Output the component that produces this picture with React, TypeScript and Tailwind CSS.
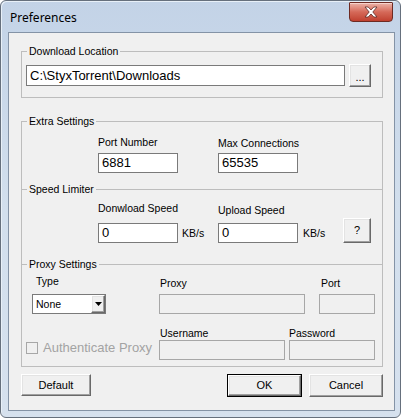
import React from "react";

const raised =
  "border border-t-white border-l-white border-r-[#696969] border-b-[#696969] shadow-[inset_-1px_-1px_0_#a0a0a0,inset_1px_1px_0_#e3e3e3] bg-[#f0f0f0]";

function TextBox({ w, value, disabled }: { w: string; value?: string; disabled?: boolean }) {
  return (
    <div
      className={`${w} h-[20px] border ${
        disabled ? "border-[#a7a7a7] bg-[#f0f0f0]" : "border-[#7a7a7a] bg-white"
      } text-[13px] leading-[18px] pl-[3px]`}
    >
      {value}
    </div>
  );
}

function Label({ children, cls = "" }: { children: React.ReactNode; cls?: string }) {
  return <div className={`text-[10.5px] leading-[13px] whitespace-nowrap ${cls}`}>{children}</div>;
}

export default function App() {
  return (
    <div className="w-[403px] h-[420px] bg-white font-['Liberation_Sans',Arial,sans-serif] text-black">
      <div className="w-[401px] h-[418px] border border-[#66707d] rounded-[6px] bg-linear-to-b from-[#c3d3e7] via-[#d2dfed] to-[#d6e1ee] flex flex-col shadow-[inset_1px_1px_0_#e8f0f8]">
        {/* title bar */}
        <div className="h-[31px] shrink-0 flex items-start justify-between">
          <span className="ml-[9px] mt-[9px] text-[12px] leading-[15px] font-['Noto_Sans',sans-serif] text-black">
            Preferences
          </span>
          <div className="mt-[1px] mr-[7px] w-[44px] h-[20px] rounded-b-[4px] rounded-t-[1px] border border-[#6e2b23] bg-linear-to-b from-[#eab3a9] via-[#d56959] to-[#c0402f] flex items-center justify-center shadow-[inset_0_1px_0_#f5d2cb]">
            <svg width="14" height="12" viewBox="0 0 14 12">
              <polygon
                points="1,1 4.2,1 7,4 9.8,1 13,1 8.8,6 13,11 9.8,11 7,8 4.2,11 1,11 5.2,6"
                fill="#ffffff"
                stroke="#5a2a25"
                strokeWidth="0.8"
                strokeLinejoin="round"
              />
            </svg>
          </div>
        </div>

        {/* client area */}
        <div className="ml-[7px] w-[387px] h-[379px] border border-[#8493a6] bg-[#f0f0f0] flex flex-col">
          {/* Download Location */}
          <fieldset className="mt-[11px] ml-[12px] w-[362px] border border-[#bdbdbd] px-0 pb-[10px]">
            <legend className="ml-[5px] px-[2px] text-[10.5px] leading-[14px]">Download Location</legend>
            <div className="flex items-center gap-[4px] pl-[4px] pt-[6px]">
              <div className="w-[319px] h-[21px] bg-white border border-[#7a7a7a] text-[13px] leading-[19px] pl-[3px]">
                {"C:\\StyxTorrent\\Downloads"}
              </div>
              <div className={`w-[22px] h-[23px] ${raised} flex items-center justify-center text-[11px] leading-[11px] pt-[3px]`}>
                ...
              </div>
            </div>
          </fieldset>

          {/* Extra Settings */}
          <fieldset className="mt-[16px] ml-[12px] w-[362px] border border-[#bdbdbd] px-0 pb-[6px]">
            <legend className="ml-[5px] px-[2px] text-[10.5px] leading-[14px]">Extra Settings</legend>

            <div className="flex pl-[76px] pt-[8px]">
              <div className="w-[120px] flex flex-col">
                <Label>Port Number</Label>
                <div className="mt-[4px]">
                  <TextBox w="w-[80px]" value="6881" />
                </div>
              </div>
              <div className="flex flex-col">
                <Label cls="mt-[1px]">Max Connections</Label>
                <div className="mt-[3px]">
                  <TextBox w="w-[80px]" value="65535" />
                </div>
              </div>
            </div>

            {/* Speed Limiter */}
            <fieldset className="mt-[9px] border-0 border-t border-[#bdbdbd] px-0">
              <legend className="ml-[5px] px-[2px] text-[10.5px] leading-[14px]">Speed Limiter</legend>
              <div className="flex items-end pl-[76px] pt-[6px]">
                <div className="w-[120px] flex flex-col">
                  <Label>Donwload Speed</Label>
                  <div className="mt-[8px] flex items-center">
                    <TextBox w="w-[80px]" value="0" />
                    <span className="ml-[4px] text-[10.5px] leading-[13px]">KB/s</span>
                  </div>
                </div>
                <div className="w-[125px] flex flex-col">
                  <Label>Upload Speed</Label>
                  <div className="mt-[6px] flex items-center">
                    <TextBox w="w-[80px]" value="0" />
                    <span className="ml-[5px] text-[10.5px] leading-[13px]">KB/s</span>
                  </div>
                </div>
                <div className={`w-[28px] h-[25px] ${raised} flex items-center justify-center text-[11px]`}>?</div>
              </div>
            </fieldset>

            {/* Proxy Settings */}
            <fieldset className="mt-[14px] border-0 border-t border-[#bdbdbd] px-0">
              <legend className="ml-[5px] px-[2px] text-[10.5px] leading-[14px]">Proxy Settings</legend>
              <div className="flex items-end pt-[4px]">
                <div className="w-[137px] pl-[10px] flex flex-col">
                  <Label cls="ml-[4px] mb-[6px]">Type</Label>
                  <div className="w-[74px] h-[20px] bg-white border border-[#7a7a7a] flex items-center justify-between">
                    <span className="pl-[3px] text-[10.5px] leading-[13px]">None</span>
                    <div className={`w-[14px] h-[18px] ${raised} flex items-center justify-center`}>
                      <svg width="7" height="4" viewBox="0 0 7 4">
                        <polygon points="0,0 7,0 3.5,4" fill="#000" />
                      </svg>
                    </div>
                  </div>
                </div>
                <div className="w-[160px] flex flex-col">
                  <Label cls="ml-[1px] mb-[4px]">Proxy</Label>
                  <TextBox w="w-[146px]" disabled />
                </div>
                <div className="flex flex-col">
                  <Label cls="ml-[2px] mb-[4px]">Port</Label>
                  <TextBox w="w-[56px]" disabled />
                </div>
              </div>

              <div className="flex items-end mt-[13px]">
                <div className="w-[137px] pl-[4px] mb-[5px] flex items-center">
                  <div className="w-[12px] h-[12px] border border-[#a7a7a7] bg-[#f0f0f0]" />
                  <span className="ml-[5px] text-[13px] leading-[15px] text-[#a3a3a3] whitespace-nowrap">
                    Authenticate Proxy
                  </span>
                </div>
                <div className="w-[130px] flex flex-col">
                  <Label cls="ml-[1px]">Username</Label>
                  <TextBox w="w-[126px]" disabled />
                </div>
                <div className="flex flex-col">
                  <Label>Password</Label>
                  <TextBox w="w-[86px]" disabled />
                </div>
              </div>
            </fieldset>
          </fieldset>

          {/* Buttons */}
          <div className="flex mt-[7px] ml-[12px] w-[362px]">
            <div className={`w-[70px] h-[22px] ${raised} flex items-center justify-center text-[11px]`}>Default</div>
            <div className="ml-auto w-[75px] h-[23px] border border-black">
              <div className={`w-full h-full ${raised} flex items-center justify-center text-[11px]`}>OK</div>
            </div>
            <div className={`ml-[7px] w-[74px] h-[23px] ${raised} flex items-center justify-center text-[11px]`}>Cancel</div>
          </div>
        </div>
      </div>
    </div>
  );
}
